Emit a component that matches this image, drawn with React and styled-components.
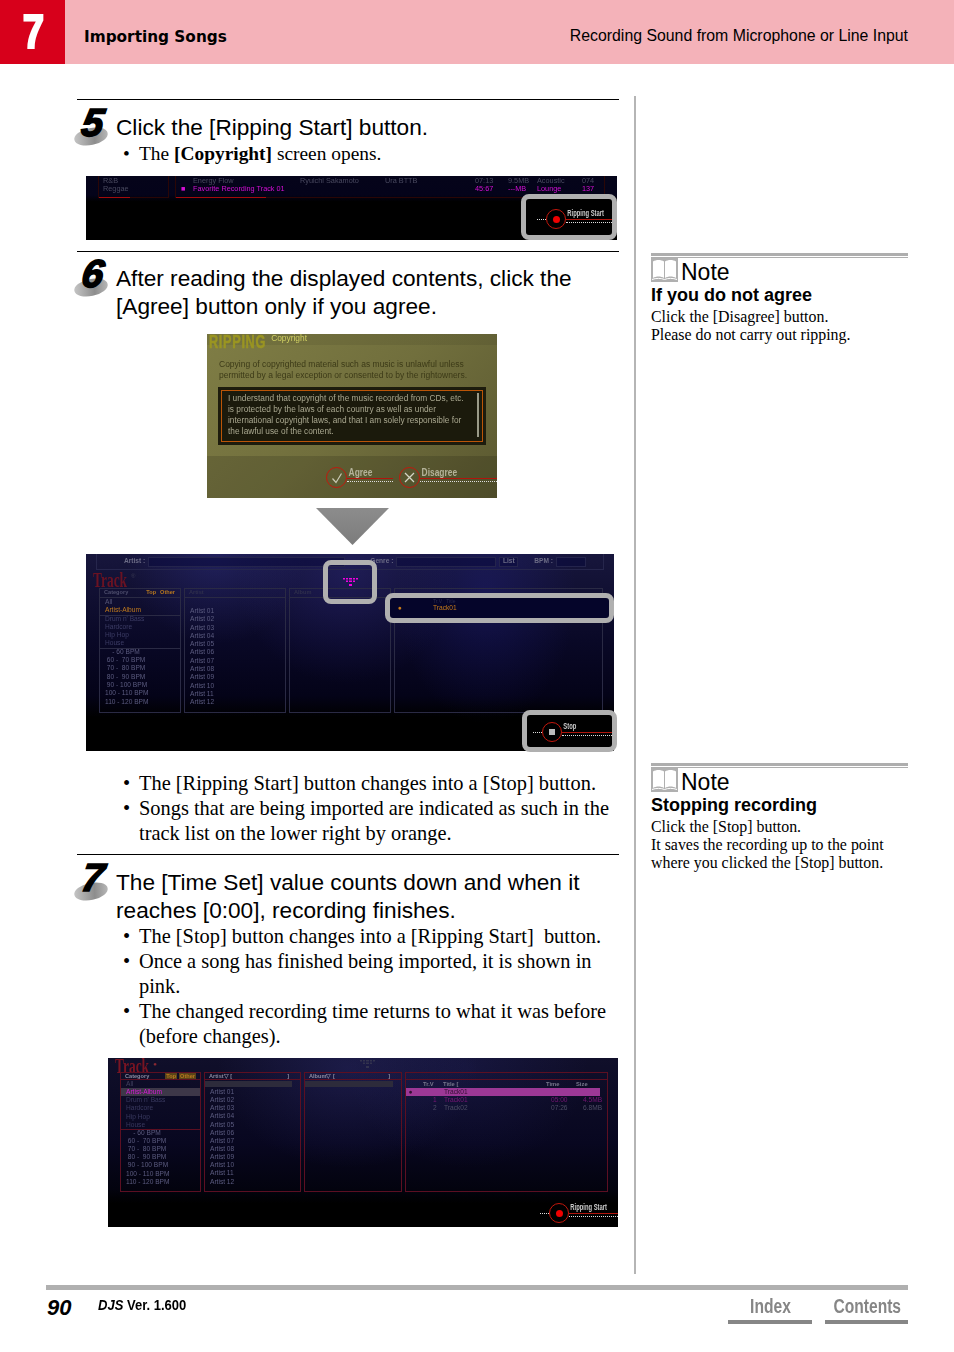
import React from "react";
import styled, { createGlobalStyle } from "styled-components";

const Global = createGlobalStyle`
  html, body { margin: 0; padding: 0; background: #fff; }
  body { width: 954px; height: 1352px; overflow: hidden; font-family: "Liberation Sans", Arial, sans-serif; color: #000; }
  * { box-sizing: border-box; }
`;

const Page = styled.div`width: 954px; height: 1352px; display: flex; flex-direction: column;`;

const Header = styled.header`height: 64px; background: #f4b2b9; display: flex; align-items: center; padding-right: 46px;`;
const ChapterBox = styled.div`
  width: 65px; height: 64px; background: #d7001b; color: #fff; display: flex; align-items: center; justify-content: center;
  font: bold 48px "Liberation Sans", sans-serif; -webkit-text-stroke: 2.2px #fff; padding: 0 0 2px 1px;
  span { display: inline-block; transform: scaleX(.8); }
`;
const ChapterTitle = styled.div`margin-left: 19px; font: bold 15.3px "DejaVu Sans", sans-serif; flex: 1; position: relative; top: 5px;`;
const SectionTitle = styled.div`font-size: 15.85px; position: relative; top: 4px;`;

const Main = styled.main`height: 1221px; display: flex; align-items: flex-start;`;
const LeftCol = styled.div`width: 542px; margin: 35px 0 0 77px;`;
const Divider = styled.div`width: 2px; height: 1178px; margin: 32px 0 0 15px; background: #b5b5b5;`;
const RightCol = styled.aside`width: 257px; margin-left: 15px; padding-top: 189px;`;

const Step = styled.section`border-top: 1px solid #000; padding: ${(p) => p.$pt || 12}px 0 ${(p) => p.$pb || 0}px;`;
const StepHead = styled.div`display: flex; align-items: flex-start;`;
const Badge = styled.div`
  width: 39px; height: 28px; flex: none; position: relative;
  &::before {
    content: ""; position: absolute; left: -3px; top: 15px; width: 34px; height: 17px; border-radius: 50%;
    background: linear-gradient(100deg, #c8c8c8, #8d8d8d 60%, #bbb); transform: rotate(-12deg);
  }
  span {
    position: absolute; left: 5px; top: -10px; font: italic bold 39px/40px "Liberation Sans", sans-serif; color: #000;
    -webkit-text-stroke: 1.6px #000; transform: skewX(-9deg);
  }
`;
const StepTitle = styled.h2`margin: 0; font: 400 22.65px/28px "Liberation Sans", sans-serif;`;
const Bullets = styled.ul`
  list-style: none; margin: ${(p) => p.$mt || 0}px 0 0; padding: 0 0 0 62px;
  font: ${(p) => p.$fs || 20.4}px/25px "Liberation Serif", serif; width: ${(p) => p.$w || 542}px;
`;
const Bullet = styled.li`
  &::before { content: "•"; display: inline-block; width: 16px; margin-left: -16px; }
`;
const Tri = styled.div`
  width: 73px; height: 37px; margin: 10px 0 0 239px; background: linear-gradient(#8c8c8c, #7c7c7c);
  clip-path: polygon(0 0, 100% 0, 50% 100%);
`;

const Screen = styled.div`
  position: relative; margin: ${(p) => p.$mt}px 0 0 ${(p) => p.$ml}px; width: ${(p) => p.$w}px; height: ${(p) => p.$h}px;
  overflow: ${(p) => (p.$clip ? "hidden" : "visible")}; background: ${(p) => p.$bg || "#000"}; color: #6d6d8e;
  font: 6.6px/8.3px "Liberation Sans", sans-serif; filter: blur(.3px);
`;
const Ring = styled.div`
  position: absolute; left: ${(p) => p.$x}px; top: ${(p) => p.$y}px; width: ${(p) => p.$w}px; height: ${(p) => p.$h}px;
  border: 5px solid #b0b0b0; border-radius: 8px; background: ${(p) => p.$fill || "transparent"};
  display: flex; align-items: center; justify-content: ${(p) => p.$justify || "center"}; padding-top: ${(p) => p.$pt || 0}px; overflow: hidden;
`;
const RingStack = styled.div`width: 100%; display: flex; flex-direction: column; color: #2a2a4c;`;

/* action button drawn by the application */
const ActionWrap = styled.div`display: flex; align-items: center; width: ${(p) => p.$w}px; flex: none;`;
const ActionCircle = styled.div`
  width: ${(p) => p.$d}px; height: ${(p) => p.$d}px; border-radius: 50%; border: 1.5px solid #c3170c; flex: none;
  display: flex; align-items: center; justify-content: center;
`;
const Dash = styled.div`width: 9px; flex: none; border-top: 1px dotted #ddd;`;
const ActionRest = styled.div`flex: 1; min-width: 0; display: flex; flex-direction: column; margin-top: -7px;`;
const ActionLabel = styled.div`
  font: bold ${(p) => p.$s || 9}px/10px "Liberation Sans", sans-serif; color: ${(p) => p.$c || "#bbb"};
  padding-left: 2px; white-space: nowrap; height: 10px; transform-origin: left; transform: scaleX(${(p) => p.$sx || 0.65});
`;
const RedLine = styled.div`height: 1px; background: #b0150c; margin-top: 1px;`;
const DotLine = styled.div`margin-top: 2px; border-top: 1px dotted #ddd;`;
const RedDot = styled.div`width: 7px; height: 7px; border-radius: 50%; background: #f00000;`;
const StopSq = styled.div`width: 6px; height: 6px; background: #bbb;`;

const Action = ({ w, d = 20, label, icon, dash = true, s, c, sx }) => (
  <ActionWrap $w={w}>
    {dash && <Dash />}
    <ActionCircle $d={d}>{icon}</ActionCircle>
    <ActionRest>
      <ActionLabel $s={s} $c={c} $sx={sx}>{label}</ActionLabel>
      <RedLine />
      <DotLine />
    </ActionRest>
  </ActionWrap>
);

/* Screen 1 strip */
const S1Grid = styled.div`display: grid; grid-template-columns: 71px 430px; gap: 6px; padding-left: 12px;`;
const S1Panel = styled.div`
  height: 22px; border: 1px solid #2a0606; border-top: 0; padding: 1px 0 0 ${(p) => p.$pad}px; position: relative; color: #49495f; font-size: 7.3px; line-height: 8.2px;
  &::after { content: ""; position: absolute; left: 0; bottom: -1px; width: ${(p) => p.$bar}px; height: 1px; background: #a30a0a; }
`;
const S1Row = styled.div`display: grid; grid-template-columns: 12px 107px 85px 90px 33px 29px 45px 1fr; height: 8.2px; white-space: nowrap; color: ${(p) => (p.$on ? "#d50fd5" : "inherit")};`;

/* Screen 2 */
const OliveTop = styled.div`height: 16px; padding-left: 2px; display: flex; align-items: flex-start; background: linear-gradient(rgba(0,0,0,.08) 70%, transparent 70%);`;
const Rip = styled.div`
  flex: none; margin-right: -25px; white-space: nowrap; font: bold 19px/16px "Liberation Sans", sans-serif; color: #9a9522;
  -webkit-text-stroke: .5px #9a9522;
  span { display: inline-block; transform-origin: left top; transform: scaleX(.67); letter-spacing: 1px; }
`;
const CopyTag = styled.div`font: 8.4px/9px "Liberation Sans", sans-serif; color: #cfcf62; margin-left: 2px;`;
const OliveText = styled.div`padding: 9px 0 0 12px; font: 8.5px/10.5px "Liberation Sans", sans-serif; color: #3c3a17; white-space: nowrap;`;
const LicenseBox = styled.div`
  margin: 7px 11px 0; height: 58px; background: #1b1a0c; border: 2px solid #1d1c0d; padding: 1px;
  > div { height: 100%; border: 1.5px solid #bb5507; padding: 2px 1px 0 6px; display: flex; justify-content: space-between;
    font: 8.3px/11px "Liberation Sans", sans-serif; color: #aaa890; white-space: nowrap; }
`;
const Scroll = styled.div`width: 2px; height: 44px; background: #9a9a88; margin-right: 2px;`;
const AgreeBand = styled.div`
  margin-top: 11px; height: 43px; background: rgba(0,0,0,.14); display: flex; align-items: flex-start; padding: 11px 0 0 119px; gap: 6px;
`;

/* Screens 3 & 4 */
const BgA = `radial-gradient(ellipse 90px 90px at 130px 0px, rgba(60,60,170,.3), transparent),
  radial-gradient(ellipse 110px 110px at 260px 20px, rgba(50,45,140,.35), transparent),
  radial-gradient(ellipse 90px 130px at 400px 40px, rgba(40,40,160,.28), transparent),
  linear-gradient(#17163c 0%, #090826 45%, #040318 72%, #000 83%)`;
const BgB = `radial-gradient(ellipse 130px 100px at 240px 10px, rgba(60,60,150,.28), transparent),
  radial-gradient(ellipse 120px 100px at 360px 10px, rgba(50,50,140,.2), transparent),
  linear-gradient(#100f2a 0%, #080720 50%, #03030e 78%, #000 86%)`;

const TopBar = styled.div`
  height: 16px; margin: 0 10px; border: 1px solid #26264c; border-top: 0; display: flex; align-items: center; color: #6c6c86;
  font-weight: bold; font-size: 6.6px;
`;
const BarLabel = styled.span`margin-left: ${(p) => p.$ml}px;`;
const BarField = styled.span`
  width: ${(p) => p.$w}px; height: 10px; margin-left: 3px; background: rgba(10,10,60,.55); border: 1px solid #24244c; display: flex; align-items: center; justify-content: center;
`;
const TrackTitle = styled.div`
  height: ${(p) => p.$h}px; padding: 2px 0 0 ${(p) => p.$pl}px; display: flex; align-items: flex-start;
  b { display: block; width: 32px; font: bold 21px/${(p) => p.$h - 2}px "Liberation Serif", serif; color: ${(p) => p.$c}; transform-origin: left top; transform: scaleX(.64); }
  small { font: 6px/8px "Liberation Sans"; margin: 0 0 0 6px; color: ${(p) => p.$dot}; }
`;
const Panels = styled.div`
  --row: ${(p) => p.$row}px;
  display: grid; grid-template-columns: ${(p) => p.$cols}; gap: ${(p) => p.$gap}px; padding-left: ${(p) => p.$pl}px; height: ${(p) => p.$h}px;
`;
const Panel = styled.div`border: 1px solid ${(p) => p.$bd}; color: #5c5c80; position: relative;`;
const PanelHead = styled.div`
  height: ${(p) => p.$h || 9}px; border-bottom: 1px solid ${(p) => p.$bd}; padding: 0 ${(p) => p.$pr || 4}px 0 4px; font-size: 5.6px; line-height: 7px; color: ${(p) => p.$c || "#4d4d6c"}; display: flex; justify-content: space-between; white-space: nowrap; font-weight: bold;
`;
const Chips = styled.span`
  display: flex; gap: 2px; color: #b8781e;
  i { font-style: normal; background: ${(p) => p.$bg || "none"}; padding: 0 1px; line-height: 6px; height: 6px; }
`;
const Item = styled.div`
  height: var(--row); padding-left: ${(p) => p.$pl || 5}px; white-space: ${(p) => (p.$pre ? "pre" : "nowrap")}; color: ${(p) => p.$c || "inherit"}; background: ${(p) => p.$bg || "none"};
`;
const ListGap = styled.div`height: ${(p) => p.$h}px; background: ${(p) => p.$bg || "none"}; margin: ${(p) => p.$mt || 0}px 8px ${(p) => p.$mb || 0}px 0;`;
const SectionLine = styled.div`border-top: 1px solid ${(p) => p.$bd}; margin-bottom: -1px;`;
const TrackHead = styled.div`
  display: grid; grid-template-columns: 20px 103px 30px 1fr; height: 8px; line-height: 8px; padding-left: 17px; font-size: 5.8px; font-weight: bold; color: #77778c; white-space: nowrap;
`;
const TrackRow = styled.div`
  display: grid; grid-template-columns: 26px 11px 107px 32px 1fr; height: 8.1px; white-space: nowrap; color: ${(p) => p.$c || "inherit"}; background: ${(p) => p.$bg || "none"}; padding-left: 1px; margin-right: ${(p) => p.$mr || 0}px;
`;
const RingRow = styled.div`
  display: grid; grid-template-columns: 35px 1fr; padding-left: 8px; height: ${(p) => p.$h}px; line-height: ${(p) => p.$h}px; font-size: ${(p) => p.$fs || 6.6}px; color: ${(p) => p.$c || "inherit"}; white-space: nowrap; overflow: hidden;
`;
const FootSlot = styled.div`position: absolute; right: ${(p) => p.$r}px; bottom: ${(p) => p.$b}px;`;
const WaveSlot = styled.div`position: absolute; left: ${(p) => p.$x}px; top: ${(p) => p.$y}px;`;

const Note = styled.section`margin-top: ${(p) => p.$mt || 0}px;`;
const NoteRule = styled.div`height: 5px; border-top: 3px solid #aeaeae; border-bottom: 1px solid #aeaeae;`;
const NoteHead = styled.div`
  display: flex; align-items: flex-start; height: 24px; font: 23px/28px "Liberation Sans", sans-serif; gap: 3px;
  svg { display: block; flex: none; }
`;
const NoteTitle = styled.h3`margin: 2px 0 0; font: bold 18px/22px "Liberation Sans", sans-serif;`;
const NoteBody = styled.p`margin: 2px 0 0; font: 15.9px/18px "Liberation Serif", serif;`;

const Footer = styled.footer`
  margin-left: 46px; width: 862px; border-top: 5px solid #b0b0b0; display: flex; align-items: flex-start;
`;
const PageNo = styled.div`width: 52px; padding-left: 1px; font: italic bold 22px/24px "Liberation Sans", sans-serif; margin-top: 6px;`;
const Ver = styled.div`
  flex: 1; font: bold 14px/16px "Liberation Sans", sans-serif; margin-top: 7px; white-space: nowrap;
  span { display: inline-block; transform-origin: left; transform: scaleX(.93); }
`;
const NavBtn = styled.div`
  width: ${(p) => p.$w}px; height: 34px; margin-left: ${(p) => p.$ml || 0}px; border-bottom: 4px solid #868686; color: #868686; text-align: center;
  font: bold 19.5px/32px "Liberation Sans", sans-serif; white-space: nowrap;
  span { display: inline-block; transform: scaleX(.8); }
`;

const Book = () => (
  <svg width="27" height="24" viewBox="0 0 27 24">
    <rect width="27" height="24" fill="#b0b0b0" />
    <path d="M2 3.5C5 1.5 10 1.5 13 3.5V20C10 18 5 18 2 20Z" fill="#fff" />
    <path d="M14 3.5C17 1.5 22 1.5 25 3.5V20C22 18 17 18 14 20Z" fill="#fff" />
    <path d="M1 21.5C5 20 10 20 13.5 21.5C17 20 22 20 26 21.5" fill="none" stroke="#fff" strokeWidth="1" />
  </svg>
);
const Check = () => (
  <svg width="12" height="12" viewBox="0 0 12 12"><path d="M1.5 6.5L5 10.5L10.5 1.5" fill="none" stroke="#c9c9b5" strokeWidth="1.2" /></svg>
);
const Cross = () => (
  <svg width="11" height="11" viewBox="0 0 11 11"><path d="M1 1L10 10M10 1L1 10" fill="none" stroke="#d5d5c5" strokeWidth="1.3" /></svg>
);
const LevelDots = ({ c }) => (
  <svg width="15" height="8" viewBox="0 0 15 8" fill={c}>
    <path d="M0 0h2v1.5H0zM3 0h2v1.5H3zM6 0h3v1.5H6zM10 0h2v1.5h-2zM13 0h2v1.5h-2z" />
    <path d="M3 2.5h2V4H3zM6 2.5h3V4H6zM10 2.5h2V4h-2z" />
    <path d="M6 6h3v2H6z" />
  </svg>
);

const cats1 = ["Drum n' Bass", "Hardcore", "Hip Hop", "House"];
const bpm = ["    - 60 BPM", " 60 -  70 BPM", " 70 -  80 BPM", " 80 -  90 BPM", " 90 - 100 BPM", "100 - 110 BPM", "110 - 120 BPM"];
const artists = Array.from({ length: 12 }, (_, i) => `Artist ${String(i + 1).padStart(2, "0")}`);

export default function App() {
  const bdA = "#2a2a44";
  const bdB = "#5c0f22";
  return (
    <Page>
      <Global />
      <Header>
        <ChapterBox><span>7</span></ChapterBox>
        <ChapterTitle>Importing Songs</ChapterTitle>
        <SectionTitle>Recording Sound from Microphone or Line Input</SectionTitle>
      </Header>
      <Main>
        <LeftCol>
          <Step $pt={13} $pb={11}>
            <StepHead>
              <Badge><span>5</span></Badge>
              <StepTitle>Click the [Ripping Start] button.</StepTitle>
            </StepHead>
            <Bullets $fs={19.4}><Bullet>The <b>[Copyright]</b> screen opens.</Bullet></Bullets>
            <Screen $mt={10} $ml={9} $w={531} $h={64} $bg="linear-gradient(#05041a 0, #04031a 30%, #000 40%)">
              <S1Grid>
                <S1Panel $bar={31} $pad={4}>
                  <div>R&amp;B</div>
                  <div>Reggae</div>
                </S1Panel>
                <S1Panel $bar={90} $pad={5}>
                  <S1Row><span /><span>Energy Flow</span><span>Ryuichi Sakamoto</span><span>Ura BTTB</span><span>07:13</span><span>9.5MB</span><span>Acoustic</span><span>074</span></S1Row>
                  <S1Row $on><span>■</span><span>Favorite Recording Track 01</span><span /><span /><span>45:67</span><span>---MB</span><span>Lounge</span><span>137</span></S1Row>
                </S1Panel>
              </S1Grid>
              <Ring $x={435} $y={18} $w={96} $h={46} $fill="#000" $justify="flex-end" $pt={4}>
                <Action w={75} d={20} label="Ripping Start" s={9} c="#ccc" icon={<RedDot />} />
              </Ring>
            </Screen>
          </Step>

          <Step $pb={8}>
            <StepHead>
              <Badge><span>6</span></Badge>
              <StepTitle>After reading the displayed contents, click the<br />[Agree] button only if you agree.</StepTitle>
            </StepHead>
            <Screen $mt={14} $ml={130} $w={290} $h={164} $clip $bg="linear-gradient(135deg, #7f7d45 0%, #716f3d 50%, #5a5830 100%)">
              <OliveTop><Rip><span>RIPPING</span></Rip><CopyTag>Copyright</CopyTag></OliveTop>
              <OliveText>
                Copying of copyrighted material such as music is unlawful unless<br />
                permitted by a legal exception or consented to by the rightowners.
              </OliveText>
              <LicenseBox>
                <div>
                  <span>
                    I understand that copyright of the music recorded from CDs, etc.<br />
                    is protected by the laws of each country as well as under<br />
                    international copyright laws, and that I am solely responsible for<br />
                    the lawful use of the content.
                  </span>
                  <Scroll />
                </div>
              </LicenseBox>
              <AgreeBand>
                <Action w={67} d={21} dash={false} label="Agree" s={10.5} sx={0.8} c="#b5b39a" icon={<Check />} />
                <Action w={98} d={21} dash={false} label="Disagree" s={10.5} sx={0.8} c="#b5b39a" icon={<Cross />} />
              </AgreeBand>
            </Screen>
            <Tri />
            <Screen $mt={9} $ml={9} $w={528} $h={197} $bg={BgA}>
              <TopBar>
                <BarLabel $ml={27}>Artist :</BarLabel>
                <BarField $w={197} />
                <BarLabel $ml={25}>Genre :</BarLabel>
                <BarField $w={100} />
                <BarField $w={19}>List</BarField>
                <BarLabel $ml={16}>BPM :</BarLabel>
                <BarField $w={30} />
              </TopBar>
              <TrackTitle $h={18} $pl={7} $c="#6a1222" $dot="#3a3a52"><b>Track</b><small>®</small></TrackTitle>
              <Panels $row={8.3} $cols="82px 102px 102px 209px" $gap={3} $pl={13} $h={125}>
                <Panel $bd={bdA}>
                  <PanelHead $bd={bdA}><span>Category</span><Chips><i>Top</i><i>Other</i></Chips></PanelHead>
                  <Item $c="#565678">All</Item>
                  <Item $c="#c07a1d">Artist-Album</Item>
                  <SectionLine $bd={bdA} />
                  {cats1.map((c) => <Item key={c} $c="#3d3d66">{c}</Item>)}
                  <SectionLine $bd={bdA} />
                  {bpm.map((b) => <Item key={b} $pre>{b}</Item>)}
                </Panel>
                <Panel $bd={bdA}>
                  <PanelHead $bd={bdA} $c="#2f2f4c"><span>Artist</span></PanelHead>
                  <ListGap $h={8} $mb={1} />
                  {artists.map((a) => <Item key={a}>{a}</Item>)}
                </Panel>
                <Panel $bd={bdA}>
                  <PanelHead $bd={bdA} $c="#2f2f4c"><span>Album</span></PanelHead>
                </Panel>
                <Panel $bd={bdA} />
              </Panels>
              <Ring $x={237} $y={6} $w={54} $h={44}><LevelDots c="#f000e0" /></Ring>
              <Ring $x={299} $y={39} $w={229} $h={30} $fill="#05052a">
                <RingStack>
                  <RingRow $h={6} $fs={5}><span /><span>Tr.V&nbsp;&nbsp;&nbsp;Title</span></RingRow>
                  <RingRow $h={8} $c="#c87b18"><span>●</span><span>Track01</span></RingRow>
                  <RingRow $h={6} $fs={5}><span /><span>&nbsp;</span></RingRow>
                </RingStack>
              </Ring>
              <Ring $x={436} $y={156} $w={95} $h={42} $fill="#000" $justify="flex-end" $pt={2}>
                <Action w={79} d={20} label="Stop" s={9} c="#ccc" icon={<StopSq />} />
              </Ring>
            </Screen>
            <Bullets $mt={20}>
              <Bullet>The [Ripping Start] button changes into a [Stop] button.</Bullet>
              <Bullet>Songs that are being imported are indicated as such in the track list on the lower right by orange.</Bullet>
            </Bullets>
          </Step>

          <Step $pt={13}>
            <StepHead>
              <Badge><span>7</span></Badge>
              <StepTitle>The [Time Set] value counts down and when it<br />reaches [0:00], recording finishes.</StepTitle>
            </StepHead>
            <Bullets $w={532}>
              <Bullet>The [Stop] button changes into a [Ripping Start]&nbsp; button.</Bullet>
              <Bullet>Once a song has finished being imported, it is shown in pink.</Bullet>
              <Bullet>The changed recording time returns to what it was before (before changes).</Bullet>
            </Bullets>
            <Screen $mt={9} $ml={31} $w={510} $h={169} $bg={BgB}>
              <TrackTitle $h={14} $pl={7} $c="#7a1422" $dot="#8a2a33"><b>Track</b><small>●</small></TrackTitle>
              <Panels $row={8.15} $cols="81px 97px 98px 203px" $gap={3} $pl={12} $h={120}>
                <Panel $bd={bdB}>
                  <PanelHead $bd={bdB} $c="#8b8ba0" $h={7}><span>Category</span><Chips $bg="#5a4418"><i>Top</i><i>Other</i></Chips></PanelHead>
                  <Item $c="#40405e">All</Item>
                  <Item $c="#d81bd8" $bg="#3d3748">Artist-Album</Item>
                  {cats1.map((c) => <Item key={c} $c="#3a3a60">{c}</Item>)}
                  <SectionLine $bd={bdB} />
                  {bpm.map((b) => <Item key={b} $pre>{b}</Item>)}
                </Panel>
                <Panel $bd={bdB}>
                  <PanelHead $bd={bdB} $c="#8b8ba0" $pr={11} $h={7}><span>Artist▽ [</span><span>]</span></PanelHead>
                  <ListGap $h={6} $bg="#2d2b3b" $mt={1} $mb={1} />
                  {artists.map((a) => <Item key={a}>{a}</Item>)}
                </Panel>
                <Panel $bd={bdB}>
                  <PanelHead $bd={bdB} $c="#8b8ba0" $pr={11} $h={7}><span>Album▽ [</span><span>]</span></PanelHead>
                  <ListGap $h={6} $bg="#2d2b3b" $mt={1} />
                </Panel>
                <Panel $bd={bdB}>
                  <PanelHead $bd={bdB} $h={7} />
                  <TrackHead><span>Tr.V</span><span>Title [</span><span>Time</span><span>Size</span></TrackHead>
                  <TrackRow $bg="#9c3896" $c="#321032" $mr={7}><span>&nbsp;●</span><span /><span>Track01</span></TrackRow>
                  <TrackRow $c="#7a1676"><span /><span>1</span><span>Track01</span><span>05:00</span><span>4.5MB</span></TrackRow>
                  <TrackRow $c="#4e4e66"><span /><span>2</span><span>Track02</span><span>07:26</span><span>6.8MB</span></TrackRow>
                </Panel>
              </Panels>
              <WaveSlot $x={252} $y={2}><LevelDots c="#33334e" /></WaveSlot>
              <FootSlot $r={0} $b={4}>
                <Action w={78} d={20} label="Ripping Start" s={9} c="#ccc" icon={<RedDot />} />
              </FootSlot>
            </Screen>
          </Step>
        </LeftCol>
        <Divider />
        <RightCol>
          <Note>
            <NoteRule />
            <NoteHead><Book />Note</NoteHead>
            <NoteTitle>If you do not agree</NoteTitle>
            <NoteBody>Click the [Disagree] button.<br />Please do not carry out ripping.</NoteBody>
          </Note>
          <Note $mt={419}>
            <NoteRule />
            <NoteHead><Book />Note</NoteHead>
            <NoteTitle>Stopping recording</NoteTitle>
            <NoteBody>Click the [Stop] button.<br />It saves the recording up to the point<br />where you clicked the [Stop] button.</NoteBody>
          </Note>
        </RightCol>
      </Main>
      <Footer>
        <PageNo>90</PageNo>
        <Ver><span><i>DJS</i> Ver. 1.600</span></Ver>
        <NavBtn $w={84}><span>Index</span></NavBtn>
        <NavBtn $w={83} $ml={13}><span>Contents</span></NavBtn>
      </Footer>
    </Page>
  );
}
